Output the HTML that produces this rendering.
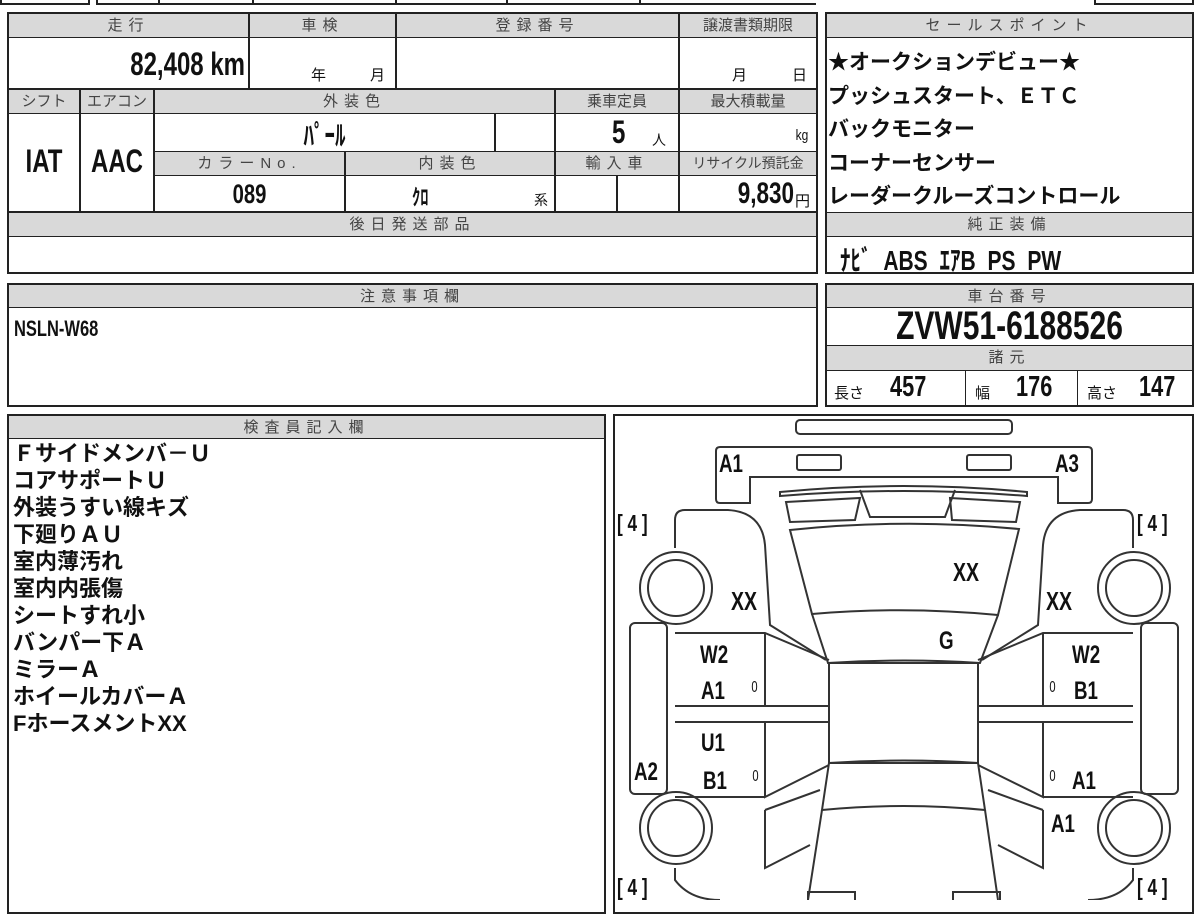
<!DOCTYPE html>
<html><head><meta charset="utf-8"><style>
*{margin:0;padding:0;box-sizing:border-box}
body{width:1200px;height:900px;background:#fff;position:relative;overflow:hidden;font-family:"Liberation Sans","Noto Sans CJK JP",sans-serif;color:#111}
.a{position:absolute}
.b{position:absolute;border:2px solid #222}
.h{position:absolute;background:#d9d9d9;border:1px solid #222;font-size:15px;color:#444;text-align:center;letter-spacing:6px;line-height:23px}
.c{position:absolute;border:1px solid #222}
.n{font-weight:bold;transform:scaleX(.75);transform-origin:left center;white-space:nowrap}
.nr{transform-origin:right center}
.nc{transform-origin:center center}
.j{font-weight:bold;font-size:22px;line-height:27px}
</style></head><body>
<div class="a" style="left:0;top:0;width:90px;height:5px;border:2px solid #222;border-top:none"></div>
<div class="a" style="left:96px;top:0;width:545px;height:5px;border:2px solid #222;border-top:none"></div>
<div class="a" style="left:158px;top:0;width:2px;height:5px;background:#222"></div>
<div class="a" style="left:252px;top:0;width:2px;height:5px;background:#222"></div>
<div class="a" style="left:395px;top:0;width:2px;height:5px;background:#222"></div>
<div class="a" style="left:506px;top:0;width:2px;height:5px;background:#222"></div>
<div class="a" style="left:641px;top:0;width:175px;height:5px;border-bottom:2px solid #222"></div>
<div class="a" style="left:1094px;top:0;width:100px;height:5px;border:2px solid #222;border-top:none"></div>

<div class="b" style="left:7px;top:12px;width:811px;height:262px"></div>
<div class="h" style="left:8px;top:13px;width:241px;height:25px">走行</div>
<div class="h" style="left:249px;top:13px;width:147px;height:25px">車検</div>
<div class="h" style="left:396px;top:13px;width:283px;height:25px">登録番号</div>
<div class="h" style="left:679px;top:13px;width:138px;height:25px;letter-spacing:0">譲渡書類期限</div>
<div class="c" style="left:8px;top:37px;width:241px;height:52px"></div>
<div class="c" style="left:249px;top:37px;width:147px;height:52px"></div>
<div class="c" style="left:396px;top:37px;width:283px;height:52px"></div>
<div class="c" style="left:679px;top:37px;width:138px;height:52px"></div>
<div class="a n nr" style="left:60px;top:46px;width:185px;text-align:right;font-size:32px">82,408 km</div>
<div class="a" style="left:311px;top:64px;font-size:15px">年</div>
<div class="a" style="left:370px;top:64px;font-size:15px">月</div>
<div class="a" style="left:732px;top:64px;font-size:15px">月</div>
<div class="a" style="left:792px;top:64px;font-size:15px">日</div>

<div class="h" style="left:8px;top:89px;width:72px;height:25px;letter-spacing:0">シフト</div>
<div class="h" style="left:80px;top:89px;width:74px;height:25px;letter-spacing:0">エアコン</div>
<div class="h" style="left:154px;top:89px;width:401px;height:25px">外装色</div>
<div class="h" style="left:555px;top:89px;width:124px;height:25px;letter-spacing:0">乗車定員</div>
<div class="h" style="left:679px;top:89px;width:138px;height:25px;letter-spacing:0">最大積載量</div>
<div class="c" style="left:8px;top:113px;width:72px;height:99px"></div>
<div class="c" style="left:80px;top:113px;width:74px;height:99px"></div>
<div class="a n nc" style="left:8px;top:143px;width:72px;text-align:center;font-size:32px">IAT</div>
<div class="a n nc" style="left:80px;top:143px;width:74px;text-align:center;font-size:32px">AAC</div>
<div class="c" style="left:154px;top:113px;width:341px;height:39px"></div>
<div class="c" style="left:495px;top:113px;width:60px;height:39px"></div>
<div class="c" style="left:555px;top:113px;width:124px;height:39px"></div>
<div class="c" style="left:679px;top:113px;width:138px;height:39px"></div>
<div class="a n nc" style="left:154px;top:114px;width:341px;text-align:center;font-size:28px">ﾊﾟｰﾙ</div>
<div class="a n" style="left:612px;top:114px;font-size:32px">5</div>
<div class="a" style="left:652px;top:130px;font-size:14px">人</div>
<div class="a" style="left:794px;top:127px;font-size:15px;transform:scaleX(.8)">kg</div>
<div class="h" style="left:154px;top:151px;width:191px;height:25px">カラーNo.</div>
<div class="h" style="left:345px;top:151px;width:210px;height:25px">内装色</div>
<div class="h" style="left:555px;top:151px;width:124px;height:25px">輸入車</div>
<div class="h" style="left:679px;top:151px;width:138px;height:25px;letter-spacing:0;font-size:14px">リサイクル預託金</div>
<div class="c" style="left:154px;top:175px;width:191px;height:37px"></div>
<div class="c" style="left:345px;top:175px;width:210px;height:37px"></div>
<div class="c" style="left:555px;top:175px;width:62px;height:37px"></div>
<div class="c" style="left:617px;top:175px;width:62px;height:37px"></div>
<div class="c" style="left:679px;top:175px;width:138px;height:37px"></div>
<div class="a n nc" style="left:154px;top:179px;width:191px;text-align:center;font-size:27px">089</div>
<div class="a n" style="left:412px;top:180px;font-size:22px">ｸﾛ</div>
<div class="a" style="left:534px;top:190px;font-size:14px">系</div>
<div class="a n nr" style="left:690px;top:177px;width:104px;text-align:right;font-size:30px">9,830</div>
<div class="a" style="left:795px;top:190px;font-size:15px">円</div>
<div class="h" style="left:8px;top:212px;width:809px;height:25px">後日発送部品</div>

<div class="b" style="left:825px;top:12px;width:369px;height:262px"></div>
<div class="h" style="left:826px;top:13px;width:367px;height:25px">セールスポイント</div>
<div class="a j" style="left:828px;top:46px;font-size:21px;line-height:33.5px">★オークションデビュー★<br>プッシュスタート、ＥＴＣ<br>バックモニター<br>コーナーセンサー<br>レーダークルーズコントロール</div>
<div class="h" style="left:826px;top:212px;width:367px;height:25px">純正装備</div>
<div class="a n" style="left:840px;top:239px;font-size:28px;word-spacing:8px">ﾅﾋﾞ ABS ｴｱB PS PW</div>

<div class="b" style="left:825px;top:283px;width:369px;height:124px"></div>
<div class="h" style="left:826px;top:284px;width:367px;height:24px">車台番号</div>
<div class="a n nc" style="left:826px;top:305px;width:367px;text-align:center;font-size:40px;line-height:42px">ZVW51-6188526</div>
<div class="h" style="left:826px;top:345px;width:367px;height:26px">諸元</div>
<div class="c" style="left:965px;top:370px;width:113px;height:36px;border-top:none;border-bottom:none"></div>
<div class="a" style="left:834px;top:382px;font-size:15px">長さ</div>
<div class="a n" style="left:890px;top:371px;font-size:29px">457</div>
<div class="a" style="left:975px;top:382px;font-size:15px">幅</div>
<div class="a n" style="left:1016px;top:371px;font-size:29px">176</div>
<div class="a" style="left:1087px;top:382px;font-size:15px">高さ</div>
<div class="a n" style="left:1139px;top:371px;font-size:29px">147</div>

<div class="b" style="left:7px;top:283px;width:811px;height:124px"></div>
<div class="h" style="left:8px;top:284px;width:809px;height:24px">注意事項欄</div>
<div class="a n" style="left:14px;top:316px;font-size:22px">NSLN-W68</div>

<div class="b" style="left:7px;top:414px;width:599px;height:500px"></div>
<div class="h" style="left:8px;top:415px;width:597px;height:24px">検査員記入欄</div>
<div class="a j" style="left:13px;top:440px">Ｆサイドメンバ－Ｕ<br>コアサポートＵ<br>外装うすい線キズ<br>下廻りＡＵ<br>室内薄汚れ<br>室内内張傷<br>シートすれ小<br>バンパー下Ａ<br>ミラーＡ<br>ホイールカバーＡ<br>FホースメントXX</div>

<div class="b" style="left:613px;top:414px;width:581px;height:500px"></div>
<svg class="a" style="left:0;top:0" width="1200" height="900" viewBox="0 0 1200 900" fill="none" stroke="#333" stroke-width="2">
<rect x="796" y="420" width="216" height="14" rx="4"/>
<path d="M720 447 H1088 Q1092 447 1092 451 V499 Q1092 503 1088 503 H1058 V477 H750 V503 H720 Q716 503 716 499 V451 Q716 447 720 447Z"/>
<rect x="797" y="455" width="44" height="15" rx="2"/>
<rect x="967" y="455" width="44" height="15" rx="2"/>
<path d="M780 492 Q904 480 1027 492 L1027 496 Q904 486 780 496Z"/>
<path d="M786 502 L860 498 L855 520 L790 522Z"/>
<path d="M860 490 L870 517 L945 517 L955 490"/>
<path d="M950 498 L1020 502 L1016 522 L952 520Z"/>
<path d="M790 530 Q904 518 1019 529 L998 615 Q904 606 812 614Z"/>
<path d="M812 614 L828 663 Q904 658 980 663 L998 615"/>
<rect x="829" y="663" width="149" height="100"/>
<path d="M829 763 Q904 758 978 763 L985 810 Q904 802 822 810Z"/>
<path d="M822 810 L808 900 M985 810 L998 900"/>
<path d="M675 548 V520 Q675 510 685 510 H728 Q762 512 765 545 L770 625 L826 660"/>
<path d="M1133 548 V520 Q1133 510 1123 510 H1080 Q1046 512 1043 545 L1038 625 L982 660"/>
<circle cx="676" cy="588" r="36"/><circle cx="676" cy="588" r="28"/>
<circle cx="1134" cy="588" r="36"/><circle cx="1134" cy="588" r="28"/>
<circle cx="676" cy="828" r="36"/><circle cx="676" cy="828" r="28"/>
<circle cx="1134" cy="828" r="36"/><circle cx="1134" cy="828" r="28"/>
<rect x="630" y="623" width="37" height="171" rx="5"/>
<rect x="1141" y="623" width="37" height="171" rx="5"/>
<path d="M675 633 H765 L829 660 M765 633 V706 M675 706 H829 M675 722 H829 M765 722 V797 L829 765 M675 797 H765"/>
<path d="M1133 633 H1043 L978 660 M1043 633 V706 M1133 706 H978 M1133 722 H978 M1043 722 V797 L978 765 M1133 797 H1043"/>
<path d="M765 810 L820 790 M765 810 V868 L810 845"/>
<path d="M1043 810 L988 790 M1043 810 V868 L998 845"/>
<path d="M675 868 V880 Q690 900 720 900 M1133 868 V880 Q1118 900 1088 900"/>
<path d="M808 900 V892 H855 V900 M1000 900 V892 H953 V900"/>
</svg>
<div class="a n" style="font-size:25px;left:719px;top:450px">A1</div>
<div class="a n" style="font-size:25px;left:1055px;top:450px">A3</div>
<div class="a n" style="font-size:23px;left:617px;top:510px">[ 4 ]</div>
<div class="a n" style="font-size:23px;left:1137px;top:510px">[ 4 ]</div>
<div class="a n" style="font-size:23px;left:617px;top:874px">[ 4 ]</div>
<div class="a n" style="font-size:23px;left:1137px;top:874px">[ 4 ]</div>
<div class="a n" style="font-size:26px;left:731px;top:586px">XX</div>
<div class="a n" style="font-size:26px;left:953px;top:557px">XX</div>
<div class="a n" style="font-size:26px;left:1046px;top:586px">XX</div>
<div class="a n" style="font-size:25px;left:939px;top:627px">G</div>
<div class="a n" style="font-size:25px;left:700px;top:641px">W2</div>
<div class="a n" style="font-size:25px;left:701px;top:677px">A1</div>
<div class="a" style="font-size:16px;left:750px;top:679px;transform:scaleX(.7)">0</div>
<div class="a n" style="font-size:25px;left:701px;top:729px">U1</div>
<div class="a n" style="font-size:25px;left:634px;top:758px">A2</div>
<div class="a n" style="font-size:25px;left:703px;top:767px">B1</div>
<div class="a" style="font-size:16px;left:751px;top:768px;transform:scaleX(.7)">0</div>
<div class="a n" style="font-size:25px;left:1072px;top:641px">W2</div>
<div class="a" style="font-size:16px;left:1048px;top:679px;transform:scaleX(.7)">0</div>
<div class="a n" style="font-size:25px;left:1074px;top:677px">B1</div>
<div class="a" style="font-size:16px;left:1048px;top:768px;transform:scaleX(.7)">0</div>
<div class="a n" style="font-size:25px;left:1072px;top:767px">A1</div>
<div class="a n" style="font-size:25px;left:1051px;top:810px">A1</div>
</body></html>
